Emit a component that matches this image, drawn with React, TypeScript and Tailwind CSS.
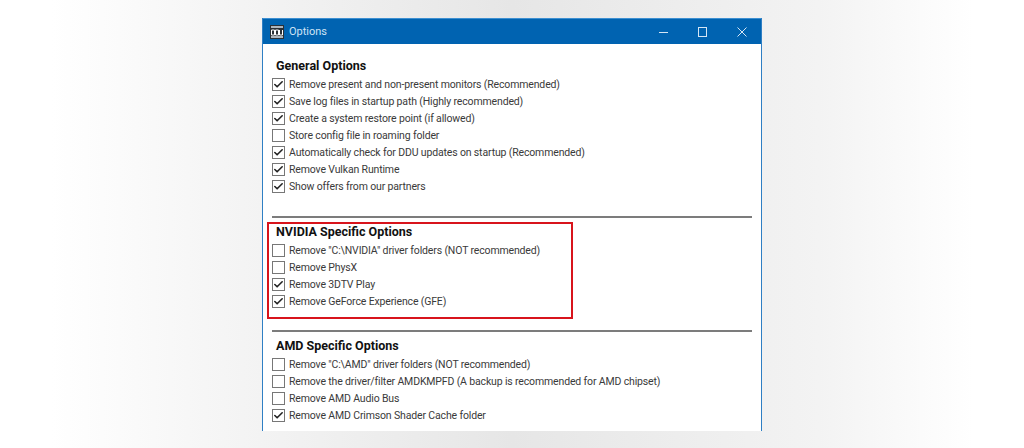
import React from 'react';
import { Check } from 'lucide-react';

const general = [
  { label: 'Remove present and non-present monitors (Recommended)', checked: true },
  { label: 'Save log files in startup path (Highly recommended)', checked: true },
  { label: 'Create a system restore point (if allowed)', checked: true },
  { label: 'Store config file in roaming folder', checked: false },
  { label: 'Automatically check for DDU updates on startup (Recommended)', checked: true },
  { label: 'Remove Vulkan Runtime', checked: true },
  { label: 'Show offers from our partners', checked: true },
];

const nvidia = [
  { label: 'Remove "C:\\NVIDIA" driver folders (NOT recommended)', checked: false },
  { label: 'Remove PhysX', checked: false },
  { label: 'Remove 3DTV Play', checked: true },
  { label: 'Remove GeForce Experience (GFE)', checked: true },
];

const amd = [
  { label: 'Remove "C:\\AMD" driver folders (NOT recommended)', checked: false },
  { label: 'Remove the driver/filter AMDKMPFD (A backup is recommended for AMD chipset)', checked: false },
  { label: 'Remove AMD Audio Bus', checked: false },
  { label: 'Remove AMD Crimson Shader Cache folder', checked: true },
];

function Option({ label, checked }: { label: string; checked: boolean }) {
  return (
    <div className="flex h-[17px] items-center gap-[4px]">
      <span className="flex h-[13px] w-[13px] shrink-0 items-center justify-center border border-[#777] bg-white">
        {checked && <Check className="h-[11px] w-[11px] text-[#222]" strokeWidth={3.5} />}
      </span>
      <span className="text-[10.5px] leading-[17px] tracking-[-0.15px] whitespace-nowrap text-[#3a3a3a]">{label}</span>
    </div>
  );
}

function Section({ title, items }: { title: string; items: { label: string; checked: boolean }[] }) {
  return (
    <div>
      <h2 className="ml-[4px] h-[19px] text-[12.5px] leading-[17px] font-bold whitespace-nowrap text-[#111]">{title}</h2>
      <div className="flex flex-col">
        {items.map((o) => (
          <Option key={o.label} label={o.label} checked={o.checked} />
        ))}
      </div>
    </div>
  );
}

function DduIcon() {
  return (
    <svg width="14" height="14" viewBox="0 0 14 14" className="mt-[1px] shrink-0">
      <rect width="14" height="14" fill="#2b3036" />
      <rect x="1" y="1" width="12" height="2" fill="#aeb6be" />
      <rect x="1" y="11" width="12" height="2" fill="#aeb6be" />
      <path d="M1.5 5h3v5h-3zM5.5 5h3v5h-3zM9.5 5v5h3v-5" fill="none" stroke="#fff" strokeWidth="1" />
    </svg>
  );
}

export default function App() {
  return (
    <div
      className="flex h-[448px] w-[1024px] justify-center overflow-hidden bg-[linear-gradient(to_right,#ffffff_5%,#f6f6f6_20%,#e6e6e6_50%,#f3f3f3_80%,#ffffff_95%)] pt-[18px]"
      style={{ fontFamily: 'Roboto, sans-serif' }}
    >
      <div className="h-[413px] w-[500px] overflow-hidden border-x border-[#2f7fc4] bg-white">
        {/* Title bar */}
        <div className="-mx-px flex h-[26px] items-center border-t border-[#3d8fd1] bg-[#0063b1] pr-[15px] pl-[8px] text-white">
          <DduIcon />
          <span className="mt-[1px] ml-[5px] text-[11px] text-[#cfe3f5]">Options</span>
          <div className="ml-auto flex items-center gap-[30px] text-[#d5e6f5]">
            <svg width="9" height="10" viewBox="0 0 9 10"><path d="M0 5.5h9" stroke="currentColor" /></svg>
            <svg width="9" height="10" viewBox="0 0 9 10"><rect x="0.5" y="0.5" width="8" height="9" fill="none" stroke="currentColor" /></svg>
            <svg width="10" height="10" viewBox="0 0 10 10"><path d="M0.5 0.5l9 9M9.5 0.5l-9 9" stroke="currentColor" /></svg>
          </div>
        </div>

        <div className="relative px-[9px] pt-[13px]">
          <Section title="General Options" items={general} />
          <div className="mt-[21px] h-[2px] bg-[#7c7c7c]" />
          <div className="relative mt-[5px]">
            {/* red annotation drawn over the section */}
            <div className="pointer-events-none absolute top-[-1px] left-[-5px] h-[97px] w-[306px] border-2 border-[#d8141c]" />
            <Section title="NVIDIA Specific Options" items={nvidia} />
          </div>
          <div className="mt-[20px] h-[2px] bg-[#7c7c7c]" />
          <div className="mt-[5px]">
            <Section title="AMD Specific Options" items={amd} />
          </div>
        </div>
      </div>
    </div>
  );
}
